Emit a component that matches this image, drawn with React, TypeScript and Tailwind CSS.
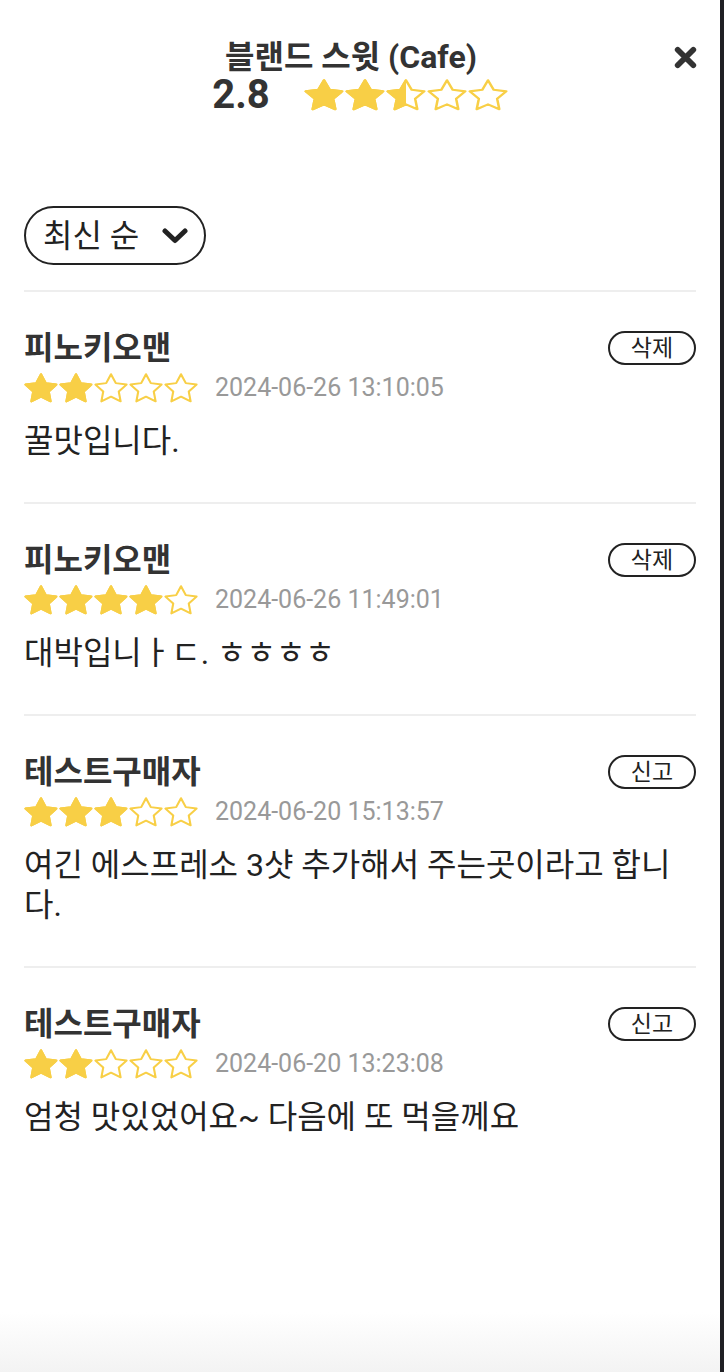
const STAR_PATH =
  "M12 2.5l2.94 5.96 6.58.96-4.76 4.64 1.12 6.55L12 17.52l-5.88 3.09 1.12-6.55L2.48 9.42l6.58-.96L12 2.5z";

type Review = {
  name: string;
  rating: number;
  date: string;
  text: string;
  action: string;
};

const reviews: Review[] = [
  { name: "피노키오맨", rating: 2, date: "2024-06-26 13:10:05", text: "꿀맛입니다.", action: "삭제" },
  { name: "피노키오맨", rating: 4, date: "2024-06-26 11:49:01", text: "대박입니ㅏㄷ. ㅎㅎㅎㅎ", action: "삭제" },
  {
    name: "테스트구매자",
    rating: 3,
    date: "2024-06-20 15:13:57",
    text: "여긴 에스프레소 3샷 추가해서 주는곳이라고 합니다.",
    action: "신고",
  },
  { name: "테스트구매자", rating: 2, date: "2024-06-20 13:23:08", text: "엄청 맛있었어요~ 다음에 또 먹을께요", action: "신고" },
];

function Star({ fill, className, id }: { fill: number; className: string; id: string }) {
  return (
    <svg viewBox="1.6 1.7 20.8 20" preserveAspectRatio="none" className={className}>
      <defs>
        <clipPath id={id}>
          <rect x="0" y="0" width={2.48 + 19.04 * fill} height="24" />
        </clipPath>
      </defs>
      <path d={STAR_PATH} fill="none" stroke="#f8cf46" strokeWidth="1.3" strokeLinejoin="round" />
      {fill > 0 && (
        <path
          d={STAR_PATH}
          fill="#f8cf46"
          stroke="#f8cf46"
          strokeWidth="1.3"
          strokeLinejoin="round"
          clipPath={`url(#${id})`}
        />
      )}
    </svg>
  );
}

function Stars({ value, size, gap, prefix }: { value: number; size: string; gap: string; prefix: string }) {
  return (
    <div className={`flex ${gap}`}>
      {[0, 1, 2, 3, 4].map((i) => (
        <Star key={i} id={`${prefix}-${i}`} fill={Math.max(0, Math.min(1, value - i))} className={size} />
      ))}
    </div>
  );
}

export default function App() {
  return (
    <div className="flex h-[1372px] w-[724px] bg-white font-['Roboto','Noto_Sans_CJK_KR',sans-serif]">
      <div className="flex h-full w-[720px] flex-col">
        <div className="px-6 pt-[39px]">
          {/* Header */}
          <div className="flex items-center">
            <h1 className="flex-1 pl-[6px] text-center text-[32px] leading-[36px] font-bold text-[#333]">
              블랜드 스윗 (Cafe)
            </h1>
            <button className="mr-[-2px] flex h-[26px] w-[26px] items-center justify-center text-[#333]">
              <svg viewBox="0 0 24 24" className="h-[25px] w-[25px]">
                <path d="M4.5 4.5L19.5 19.5M19.5 4.5L4.5 19.5" stroke="currentColor" strokeWidth="5.5" strokeLinecap="round" />
              </svg>
            </button>
          </div>
          <div className="flex h-[40px] items-center justify-center gap-[34px]">
            <span className="text-[40px] leading-none font-bold text-[#333]">2.8</span>
            <Stars value={2.5} size="h-[32px] w-[40px]" gap="gap-[1px]" prefix="head" />
          </div>

          {/* Sort */}
          <button className="mt-[91px] flex h-[59px] w-[182px] items-center justify-between rounded-full border-2 border-[#222] pr-[16px] pl-[17px] text-[32px] text-[#222]">
            <span>최신 순</span>
            <svg viewBox="0 0 26 16" className="h-[16px] w-[26px]">
              <path d="M3 3L13 12.5L23 3" fill="none" stroke="#222" strokeWidth="5" strokeLinecap="round" strokeLinejoin="round" />
            </svg>
          </button>

          {/* Reviews */}
          <div className="mt-[25px]">
            {reviews.map((r, idx) => (
              <div key={idx} className="border-t-2 border-[#eeeeee] pt-[38px] pb-[41px]">
                <div className="flex h-[36px] items-center justify-between">
                  <span className="text-[32px] font-bold text-[#333]">{r.name}</span>
                  <button className="flex h-[34px] w-[88px] items-center justify-center rounded-full border-2 border-[#222] text-[23px] leading-none text-[#222]">
                    {r.action}
                  </button>
                </div>
                <div className="mt-1 flex h-[36px] items-center gap-[17px]">
                  <Stars value={r.rating} size="h-[30px] w-[34px]" gap="gap-[1px]" prefix={`r${idx}`} />
                  <span className="text-[25px] text-[#999]">{r.date}</span>
                </div>
                <p className="mt-[15px] text-[32px] leading-[40px] text-[#222]">{r.text}</p>
              </div>
            ))}
          </div>
        </div>
        <div className="mt-auto h-[60px] bg-linear-to-b from-white to-[#f3f3f3]" />
      </div>
      <div className="h-full w-[4px] bg-[#202024]" />
    </div>
  );
}
